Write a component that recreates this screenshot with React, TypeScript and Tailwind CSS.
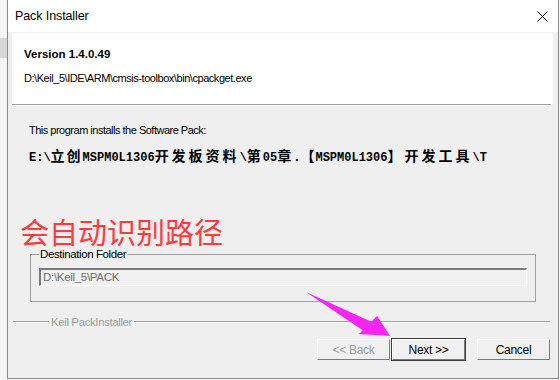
import React from "react";

const ui = { fontFamily: '"Liberation Sans", Arial, sans-serif' };
const cjk = { fontFamily: '"Noto Sans CJK SC", "Noto Sans", sans-serif' };
const mono = { fontFamily: '"Liberation Mono", "Noto Sans CJK SC", monospace' };

function Btn({ label, primary, disabled }: { label: string; primary?: boolean; disabled?: boolean }) {
  return (
    <div
      className={
        "w-[75px] h-[23px] " +
        (primary ? "border border-[#3c3c3c]" : "border border-transparent")
      }
    >
      <div className="w-full h-full border-t border-l border-white border-r border-b border-r-[#7a7a7a] border-b-[#7a7a7a] bg-[#f0f0f0] flex items-center justify-center">
        <span
          className={"text-[12px] tracking-[-0.3px] " + (disabled ? "text-[#a0a0a0]" : "text-black")}
          style={ui}
        >
          {label}
        </span>
      </div>
    </div>
  );
}

export default function App() {
  return (
    <div className="relative w-[560px] h-[380px] flex bg-[#f4f4f4] overflow-hidden" style={ui}>
      {/* desktop behind the window */}
      <div className="w-[7px] flex flex-col">
        <div className="h-[38px]" />
        <div className="h-[20px] bg-[#d6d6d6]" />
      </div>

      <div className="w-[552px] h-[379px] flex flex-col border-l border-r border-b border-[#8a8a8a] bg-[#efefef]">
        {/* title bar */}
        <div className="h-[32px] bg-white flex items-center justify-between pl-[7px] pr-[10px]">
          <span className="text-[12.5px] text-black tracking-[-0.1px]">Pack Installer</span>
          <svg width="11" height="11" viewBox="0 0 11 11">
            <path d="M0.5 0.5L10.5 10.5M10.5 0.5L0.5 10.5" stroke="#111" strokeWidth="1" />
          </svg>
        </div>

        {/* header panel */}
        <div className="ml-[4px] mr-[5px] mt-[1px] h-[71px] bg-white pl-[12px] pt-[14px] flex flex-col">
          <div className="h-[14px] leading-[14px] text-[11.5px] font-bold text-black">Version 1.4.0.49</div>
          <div className="mt-[10px] h-[14px] leading-[14px] text-[11px] tracking-[-0.45px] text-black">
            D:\Keil_5\IDE\ARM\cmsis-toolbox\bin\cpackget.exe
          </div>
        </div>
        <div className="ml-[4px] mr-[7px] h-[2px] border-t border-[#a0a0a0] border-b border-b-white" />

        {/* body */}
        <div className="pl-[21px] mt-[17px] h-[14px] leading-[14px] text-[11px] tracking-[-0.5px] text-black">
          This program installs the Software Pack:
        </div>
        <div className="pl-[21px] mt-[10px] h-[16px] leading-[16px] text-[12px] font-bold text-black whitespace-nowrap" style={mono}>
          E:\<span className="text-[14px] tracking-[2px]" style={cjk}>立创</span>MSPM0L1306
          <span className="text-[14px] tracking-[3px]" style={cjk}>开发板资料</span>\
          <span className="text-[14px] tracking-[2px]" style={cjk}>第</span>05
          <span className="text-[14px] tracking-[2px]" style={cjk}>章</span>.
          <span className="text-[14px] tracking-[1px]" style={cjk}>【</span>MSPM0L1306
          <span className="text-[14px] tracking-[3px]" style={cjk}>】开发工具</span>\T
        </div>

        {/* destination folder */}
        <fieldset className="ml-[22px] w-[506px] mt-[84px] h-[55px] border border-[#a0a0a0] pl-[8px] pr-[8px] pt-[7px]">
          <legend className="px-[1px] text-[11.5px] leading-[14px] tracking-[-0.4px] text-black">Destination Folder</legend>
          <div className="h-[18px] border-t-2 border-l-2 border-t-[#7a7a7a] border-l-[#7a7a7a] border-b border-r border-white bg-[#f0f0f0] flex items-center pl-[2px]">
            <span className="text-[11.5px] tracking-[-0.3px] text-[#6d6d6d]">D:\Keil_5\PACK</span>
          </div>
        </fieldset>

        {/* etched footer line */}
        <div className="mt-[13px] ml-[5px] mr-[8px] flex items-center gap-[2px]">
          <div className="w-[36px] h-[2px] border-t border-[#a0a0a0] border-b border-b-white" />
          <span className="text-[11.5px] leading-[14px] tracking-[-0.4px] text-[#a0a0a0]">Keil PackInstaller</span>
          <div className="flex-1 h-[2px] border-t border-[#a0a0a0] border-b border-b-white" />
        </div>

        {/* buttons */}
        <div className="mt-[9px] mr-[7px] flex justify-end">
          <Btn label="<< Back" disabled />
          <Btn label="Next >>" primary />
          <div className="w-[10px]" />
          <Btn label="Cancel" />
        </div>
      </div>

      {/* annotation overlays */}
      <div
        className="absolute left-[20px] top-[217px] text-[29px] leading-[28px] text-[#ff3c3c] whitespace-nowrap"
        style={cjk}
      >
        会自动识别路径
      </div>
      <svg className="absolute left-[300px] top-[285px] pointer-events-none" width="100" height="60" viewBox="0 0 100 60">
        <polygon points="6,7 71.3,36.7 77,31 90,51 59,49 62.7,45.3" fill="#f526f5" />
      </svg>
    </div>
  );
}
